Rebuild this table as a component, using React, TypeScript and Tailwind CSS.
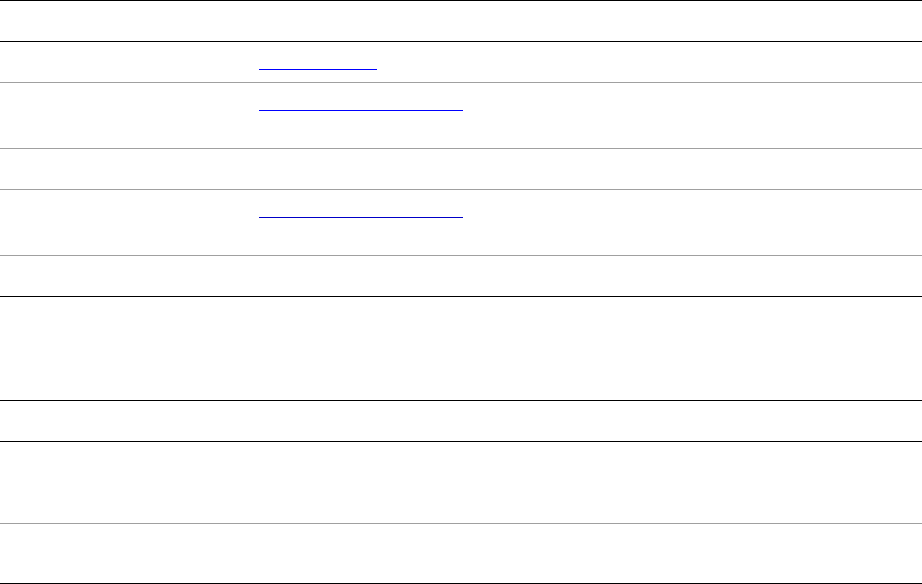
import React from "react";

type Row = { h: string; border: string; link?: { w: string; color: string } };

const rows: Row[] = [
  { h: "h-[41px]", border: "border-black" },
  { h: "h-[41px]", border: "border-[#a0a0a0]", link: { w: "w-[118px]", color: "border-[#0000ff]" } },
  { h: "h-[66px]", border: "border-[#a0a0a0]", link: { w: "w-[204px]", color: "border-[#0000ff]" } },
  { h: "h-[41px]", border: "border-[#a0a0a0]" },
  { h: "h-[66px]", border: "border-[#a0a0a0]", link: { w: "w-[204px]", color: "border-[#0000c8]" } },
  { h: "h-[41px]", border: "border-black" },
  { h: "h-[104px]", border: "border-black" },
  { h: "h-[41px]", border: "border-black" },
  { h: "h-[82px]", border: "border-[#a0a0a0]" },
  { h: "h-[60px]", border: "border-black" },
];

export default function App() {
  return (
    <div
      className="w-[922px] h-[584px] bg-white overflow-hidden"
      style={{ fontFamily: '"Liberation Sans", Arial, sans-serif' }}
    >
      <div className="border-t border-black">
        {rows.map((r, i) => (
          <div key={i} className={`flex border-b ${r.border} ${r.h}`}>
            <div className="w-[259px] shrink-0" />
            <div className="flex-1">
              {r.link && (
                <a
                  href="#"
                  className={`block h-[28px] ${r.link.w} border-b ${r.link.color} text-transparent overflow-hidden text-[13px] leading-[27px]`}
                >
                  &nbsp;
                </a>
              )}
            </div>
          </div>
        ))}
      </div>
    </div>
  );
}
